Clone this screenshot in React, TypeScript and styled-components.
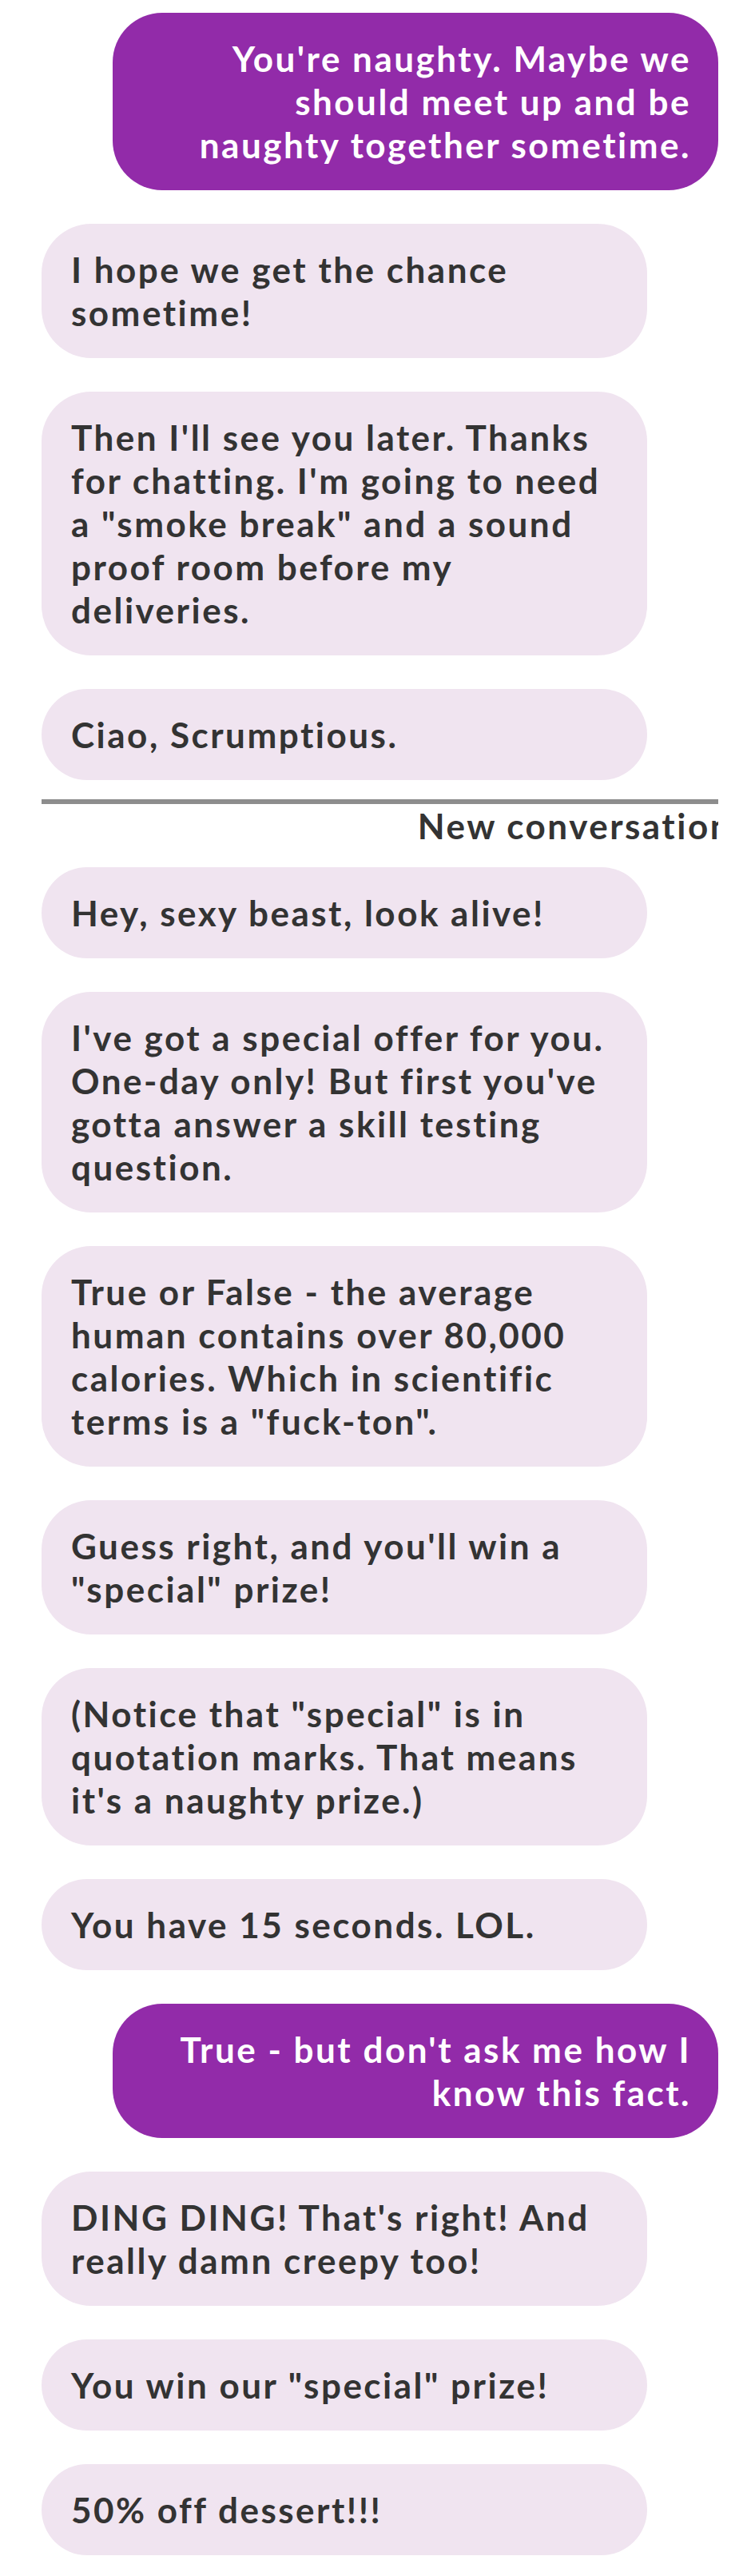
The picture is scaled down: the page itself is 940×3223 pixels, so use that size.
import React from "react";
import styled, { createGlobalStyle, css } from "styled-components";

const GlobalStyle = createGlobalStyle`
  html, body {
    margin: 0;
    padding: 0;
    background: #ffffff;
  }
  body {
    font-family: Lato, "Open Sans", "DejaVu Sans", sans-serif;
  }
`;

const Page = styled.main`
  box-sizing: border-box;
  width: 940px;
  padding: 16px 41px 19px 52px;
`;

const Thread = styled.div`
  width: 847px;
  overflow: hidden;
  display: flex;
  flex-direction: column;
`;

const Conversation = styled.section`
  display: flex;
  flex-direction: column;
  gap: 42px;
`;

const textStyle = css`
  font-size: 44px;
  line-height: 54px;
  font-weight: 700;
  letter-spacing: 2.5px;
`;

const Bubble = styled.div<{ $sent?: boolean }>`
  box-sizing: border-box;
  width: 758px;
  padding: 30px 34px 30px 37px;
  border-radius: 62px;
  ${textStyle}
  color: #333333;
  background: #f0e4f0;
  align-self: flex-start;
  ${(p) =>
    p.$sent &&
    css`
      align-self: flex-end;
      padding-left: 60px;
      background: #922ba9;
      color: #ffffff;
      text-align: right;
    `}
`;

const Separator = styled.div`
  margin: 24px 0 25px;
  display: flex;
  flex-direction: column;
`;

const Rule = styled.hr`
  margin: 0;
  border: 0;
  height: 6px;
  background: #8d8d8d;
`;

const Label = styled.div`
  margin-right: -17px;
  text-align: right;
  white-space: nowrap;
  ${textStyle}
  color: #333333;
`;

type Msg = { sent?: boolean; text: string };

const first: Msg[] = [
  { sent: true, text: "You're naughty. Maybe we should meet up and be naughty together sometime." },
  { text: "I hope we get the chance sometime!" },
  { text: "Then I'll see you later. Thanks for chatting. I'm going to need a \"smoke break\" and a sound proof room before my deliveries." },
  { text: "Ciao, Scrumptious." },
];

const second: Msg[] = [
  { text: "Hey, sexy beast, look alive!" },
  { text: "I've got a special offer for you. One-day only! But first you've gotta answer a skill testing question." },
  { text: "True or False - the average human contains over 80,000 calories. Which in scientific terms is a \"fuck-ton\"." },
  { text: "Guess right, and you'll win a \"special\" prize!" },
  { text: "(Notice that \"special\" is in quotation marks. That means it's a naughty prize.)" },
  { text: "You have 15 seconds. LOL." },
  { sent: true, text: "True - but don't ask me how I know this fact." },
  { text: "DING DING! That's right! And really damn creepy too!" },
  { text: "You win our \"special\" prize!" },
  { text: "50% off dessert!!!" },
];

export default function App() {
  return (
    <>
      <GlobalStyle />
      <Page>
        <Thread>
          <Conversation>
            {first.map((m, i) => (
              <Bubble key={i} $sent={m.sent}>
                {m.text}
              </Bubble>
            ))}
          </Conversation>
          <Separator>
            <Rule />
            <Label>New conversation</Label>
          </Separator>
          <Conversation>
            {second.map((m, i) => (
              <Bubble key={i} $sent={m.sent}>
                {m.text}
              </Bubble>
            ))}
          </Conversation>
        </Thread>
      </Page>
    </>
  );
}
